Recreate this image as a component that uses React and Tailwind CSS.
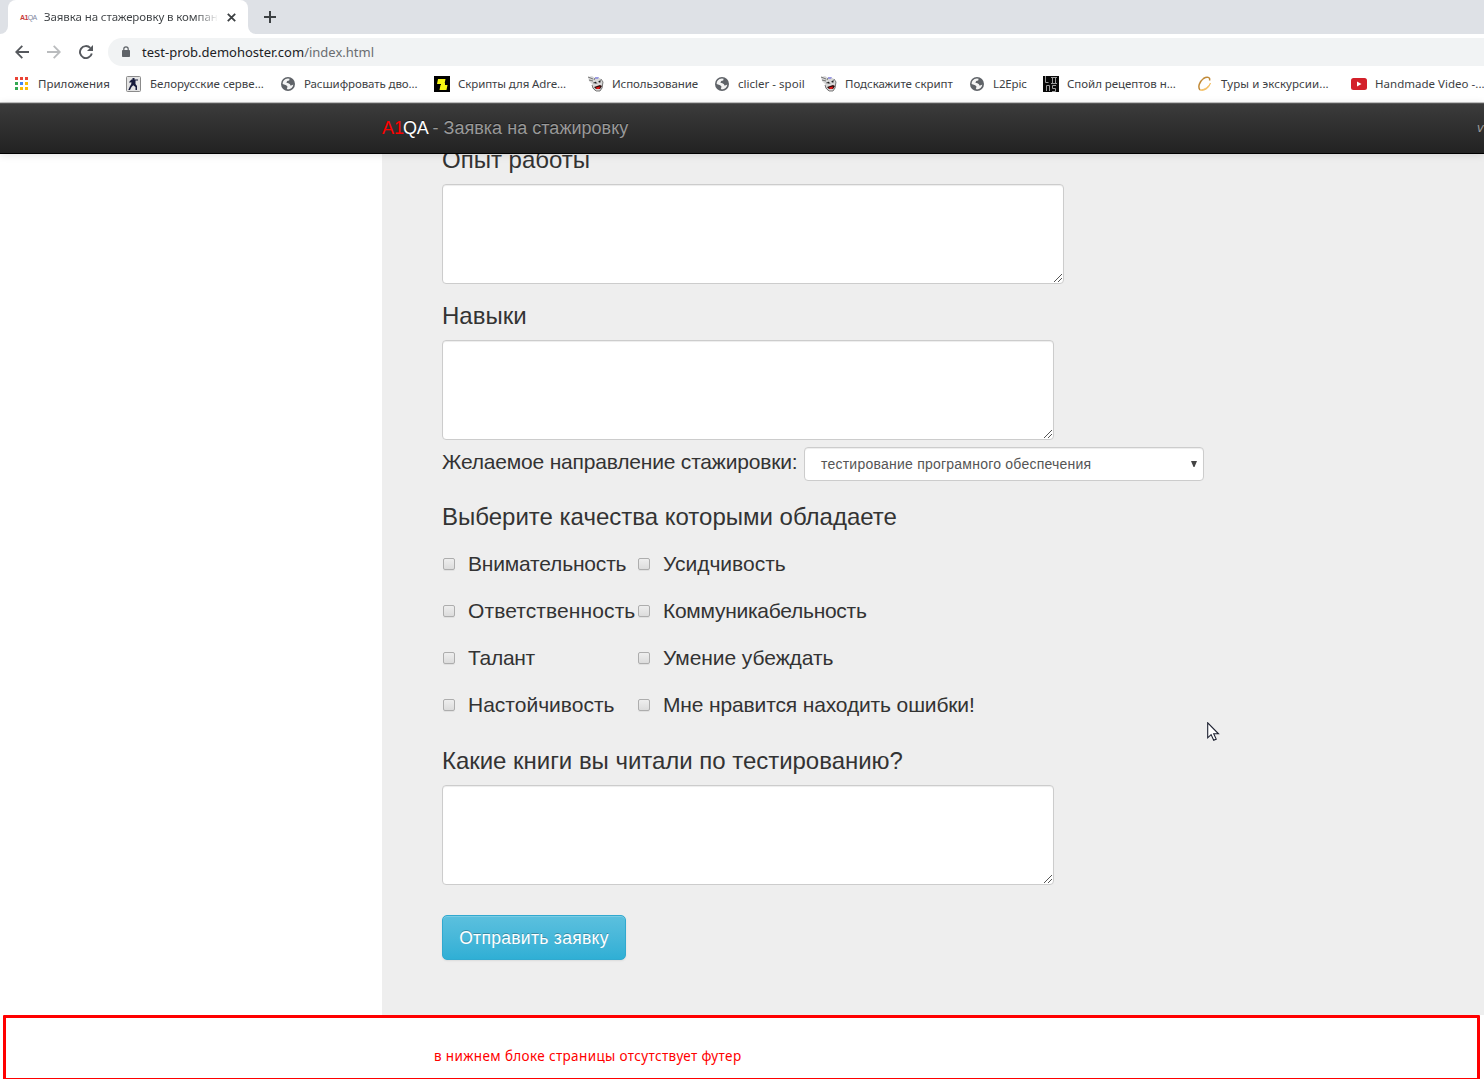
import React from "react";

function Globe() {
  return (
    <svg width="14" height="14" viewBox="0 0 14 14" className="block">
      <circle cx="7" cy="7" r="7" fill="#5f6368" />
      <path d="M1.600 7C1.600 4 3.500 1.800 6.800 1.600L8.600 1.800 8.200 3.400 6.200 4 5.400 5.800 7.400 6.200 9 7.200 9.400 8.400 11 8.200 12.300 7.400C12 10.400 10 12.300 6.800 12.400L5.800 11.600 6.600 9.800 5.200 8.200Z" fill="#f4f4f4" />
    </svg>
  );
}

function AppsGrid() {
  const dots = ["#ea4335", "#ea4335", "#ea4335", "#34a853", "#4285f4", "#fbbc05", "#34a853", "#fbbc05", "#fbbc05"];
  return (
    <svg width="14" height="14" viewBox="0 0 14 14" className="block" shapeRendering="crispEdges">
      {dots.map((c, i) => (
        <rect key={i} x={(i % 3) * 5} y={Math.floor(i / 3) * 5} width="3" height="3" fill={c} />
      ))}
    </svg>
  );
}

function CounterStrike() {
  return (
    <svg width="15" height="16" viewBox="0 0 15 16" className="block">
      <rect x=".5" y=".5" width="14" height="15" rx="1" fill="#e4e4e4" stroke="#8b8b8b" />
      <path d="M6.500 2h2v1.500H12v1H9.500V8L11 10v4H9.500v-3L7.200 9.300 5.500 11 4 14H2.300l1.500-3.500L5.300 8V6L3.500 7V5.500l2-2h1z" fill="#171c3c" />
    </svg>
  );
}

function YellowScript() {
  return (
    <svg width="16" height="16" viewBox="0 0 16 16" className="block">
      <rect width="16" height="16" fill="#000" />
      <path d="M4 3h7.500l-1 5H3zM6.500 9h7l-1 5H5.500z" fill="#f6f613" />
      <path d="M7 7h4v3H7z" fill="#f6f613" />
    </svg>
  );
}

function Gremlin() {
  return (
    <svg width="16" height="16" viewBox="0 0 16 16" className="block">
      <path d="M0 1 4 0 7 2 12 2 15 6 14.500 12 12 15 7 15 4 12 4 8 1 5Z" fill="#d8d8d8" />
      <path d="M0 1 5 3M1 4 5 5M7 2 6 4M5 7l3-1 1 2M10 6l3-2M4 9l1 3 3 3h4l2-3 1-6-2-3" stroke="#5b5b5b" strokeWidth=".8" fill="none" />
      <path d="M7 1h4l-1 2H7z" fill="#9a9ae0" />
      <path d="M6.500 6h1.500v1.500H6.500zM11 5h1.500v1.500H11z" fill="#222" />
      <path d="M6 11 12 9 14 10 12 13 8 13Z" fill="#2c0808" />
      <path d="M8 11.500 12 10.500 11.500 13H8.500Z" fill="#e01818" />
    </svg>
  );
}

function Lines() {
  return (
    <svg width="16" height="16" viewBox="0 0 16 16" className="block">
      <rect width="16" height="16" fill="#080808" />
      <path d="M2.500 0v6.500h3M8 1.500h6M9.500 1.500v6M12.500 1.500v6M8 7.500h6M3.500 15v-5.500h3V15M13 9.500H9.500v3h3v3H9" stroke="#9c9c9c" fill="none" />
    </svg>
  );
}

function GoldRing() {
  return (
    <svg width="14" height="16" viewBox="0 0 14 16" className="block">
      <path d="M11.500 4.500C12.500 1 9 .3 5.500 2.500 1.500 5.500-.5 11 2 14" fill="none" stroke="#c18a38" strokeWidth="1.500" />
      <path d="M2 14c4 1.500 9-1.500 10.500-7-2 3.500-5 6.500-10.500 7" fill="#f3ba54" stroke="#f3bd60" strokeWidth=".8" />
    </svg>
  );
}

function YouTube() {
  return (
    <svg width="16" height="12" viewBox="0 0 16 12" className="block">
      <rect width="16" height="12" rx="2.500" fill="#d3202a" />
      <path d="M6 3.500v5L10.500 6z" fill="#fff" />
    </svg>
  );
}

const bookmarks = [
  { icon: <AppsGrid />, slot: "w-[112px] pl-[15px]", gap: "w-[23px]", text: "Приложения", track: "tracking-[0.02px]" },
  { icon: <CounterStrike />, slot: "w-[154px] pl-[14px]", gap: "w-[24px]", text: "Белорусские серве...", track: "tracking-[0px]" },
  { icon: <Globe />, slot: "w-[154px] pl-[15px]", gap: "w-[23px]", text: "Расшифровать дво...", track: "tracking-[-0.1px]" },
  { icon: <YellowScript />, slot: "w-[154px] pl-[14px]", gap: "w-[24px]", text: "Скрипты для Adre...", track: "tracking-[-0.1px]" },
  { icon: <Gremlin />, slot: "w-[126px] pl-[14px]", gap: "w-[24px]", text: "Использование", track: "tracking-[-0.08px]" },
  { icon: <Globe />, slot: "w-[107px] pl-[15px]", gap: "w-[23px]", text: "clicler - spoil", track: "tracking-[0.02px]" },
  { icon: <Gremlin />, slot: "w-[148px] pl-[14px]", gap: "w-[24px]", text: "Подскажите скрипт", track: "tracking-[-0.04px]" },
  { icon: <Globe />, slot: "w-[74px] pl-[15px]", gap: "w-[23px]", text: "L2Epic", track: "tracking-[-0.15px]" },
  { icon: <Lines />, slot: "w-[154px] pl-[14px]", gap: "w-[24px]", text: "Спойл рецептов н...", track: "tracking-[-0.04px]" },
  { icon: <GoldRing />, slot: "w-[154px] pl-[15px]", gap: "w-[23px]", text: "Туры и экскурсии...", track: "tracking-[0.08px]" },
  { icon: <YouTube />, slot: "w-[154px] pl-[14px]", gap: "w-[24px]", text: "Handmade Video -...", track: "tracking-[0.02px]" },
];

function Browser() {
  return (
    <header className="shrink-0 bg-white font-['Noto_Sans','Open_Sans',sans-serif] text-[12px] text-[#3c4043]">
      <div className="flex h-[34px] bg-[#dee1e6]">
        <div className="flex w-2 shrink-0 bg-white">
          <div className="w-2 rounded-br-lg bg-[#dee1e6]" />
        </div>
        <div className="flex w-[240px] shrink-0 items-center rounded-t-lg bg-white pl-3">
          <span className="w-6 font-['Liberation_Sans',sans-serif] text-[7px] leading-none tracking-[-0.6px] text-[#8088a0]">
            <b className="text-[#c83a3a]">A1</b>QA
          </span>
          <span className="w-[174px] overflow-hidden whitespace-nowrap bg-gradient-to-r from-[#3c4043] from-88% to-transparent bg-clip-text text-[11.5px] tracking-[-0.1px] text-transparent">
            Заявка на стажеровку в компанию
          </span>
          <svg width="9" height="9" viewBox="0 0 9 9" className="ml-[9px]">
            <path d="M.8.8l7.400 7.400M8.200.8.8 8.200" stroke="#3c4043" strokeWidth="1.800" />
          </svg>
        </div>
        <div className="flex grow bg-white">
          <div className="flex grow items-center rounded-bl-lg bg-[#dee1e6] pl-4">
            <svg width="12" height="12" viewBox="0 0 12 12">
              <path d="M6 0v12M0 6h12" stroke="#3c4043" strokeWidth="2" />
            </svg>
          </div>
        </div>
      </div>
      <div className="flex h-[35px] items-center pl-[15px] pt-px">
        <svg width="14" height="14" viewBox="0 0 14 14">
          <path d="M14 7H1.500M7.300.8 1.200 7l6.100 6.200" fill="none" stroke="#55585d" strokeWidth="1.800" />
        </svg>
        <svg width="14" height="14" viewBox="0 0 14 14" className="ml-[18px]">
          <path d="M0 7h12.500M6.700.8 12.800 7l-6.100 6.200" fill="none" stroke="#babcbe" strokeWidth="1.800" />
        </svg>
        <svg width="14" height="14" viewBox="0 0 14 14" className="ml-[18px]">
          <path d="M12.800 8.500A6 6 0 1 1 11.300 2.900" fill="none" stroke="#55585d" strokeWidth="1.900" />
          <path d="M14 0v6H8z" fill="#55585d" />
        </svg>
        <div className="ml-[15px] flex h-7 grow items-center rounded-l-full bg-[#f1f3f4] pl-[14px]">
          <svg width="8" height="12" viewBox="0 0 8 12">
            <rect y="4" width="8" height="7" rx=".8" fill="#5f6368" />
            <path d="M1.800 5V3a2.200 2.200 0 0 1 4.400 0v2" fill="none" stroke="#5f6368" strokeWidth="1.200" />
          </svg>
          <span className="ml-3 whitespace-nowrap pt-[2px] text-[13px] text-[#202124]">
            test-prob.demohoster.com<span className="text-[#6a6d71]">/index.html</span>
          </span>
        </div>
      </div>
      <div className="flex h-[33px] items-center overflow-hidden whitespace-nowrap pb-[3px] text-[11.5px]">
        {bookmarks.map((b, i) => (
          <div key={i} className={"flex shrink-0 items-center " + b.slot}>
            <span className={"shrink-0 " + b.gap}>{b.icon}</span>
            <span className={b.track}>{b.text}</span>
          </div>
        ))}
      </div>
      <div className="h-px bg-[#c5c5c5]" />
    </header>
  );
}

function TextBox({ width }) {
  return (
    <div className={"relative h-[100px] " + width}>
      <textarea className="block h-full w-full resize-none rounded-[4px] border border-[#ccc] bg-white shadow-[inset_0_1px_1px_rgba(0,0,0,0.075)] outline-none" />
      <svg width="9" height="9" viewBox="0 0 9 9" className="absolute bottom-[1px] right-[1px]" shapeRendering="crispEdges">
        {[0, 1, 2, 3, 4, 5, 6, 7].map((i) => (
          <rect key={i} x={i} y={7 - i} width="1" height="1" fill="#555" />
        ))}
        {[0, 1, 2, 3].map((i) => (
          <rect key={i} x={4 + i} y={7 - i} width="1" height="1" fill="#555" />
        ))}
      </svg>
    </div>
  );
}

function Check({ text, track }) {
  return (
    <label className="flex items-center whitespace-nowrap">
      <span className="ml-px h-3 w-3 shrink-0 rounded-[2px] border border-[#adadad] bg-gradient-to-b from-[#eee] to-[#dcdcdc] shadow-[0_1px_0_rgba(0,0,0,0.06)]" />
      <span className={"ml-[13px] " + track}>{text}</span>
    </label>
  );
}

const qualities = [
  ["Внимательность", "tracking-[-0.18px]", "Усидчивость", "tracking-[0px]"],
  ["Ответственность", "tracking-[0.1px]", "Коммуникабельность", "tracking-[-0.27px]"],
  ["Талант", "tracking-[-0.3px]", "Умение убеждать", "tracking-[-0.07px]"],
  ["Настойчивость", "tracking-[0px]", "Мне нравится находить ошибки!", "tracking-[-0.14px]"],
];

export default function App() {
  return (
    <div className="flex h-[1079px] w-[1484px] flex-col overflow-hidden bg-white font-['Liberation_Sans',Arial,sans-serif] text-[#333]">
      <Browser />
      <nav className="relative z-10 flex h-[51px] shrink-0 items-center justify-between overflow-visible border-b border-black bg-gradient-to-b from-[#3c3c3c] to-[#222] pl-[382px] shadow-[0_1px_8px_rgba(0,0,0,0.12),inset_0_1px_0_#555]">
        <span className="flex whitespace-nowrap text-[18px] text-[#999] [text-shadow:0_-1px_0_rgba(0,0,0,0.5)]">
          <span className="text-[#f00] [text-shadow:none]">A1</span>
          <span className="-ml-px tracking-[-0.3px] text-white">QA</span>
          <span className="ml-1 tracking-[0.03px]">- Заявка на стажировку</span>
        </span>
        <span className="w-[7px] overflow-hidden text-[13px] italic text-[#999]">v</span>
      </nav>
      <main className="ml-[382px] h-[861px] shrink-0 bg-[#eee] pl-[60px]">
        <h2 className="h-[30px] whitespace-nowrap text-[24px] leading-none">
          <span className="relative -top-[6px]">Опыт работы</span>
        </h2>
        <TextBox width="w-[622px]" />
        <h2 className="flex h-14 items-center whitespace-nowrap pt-2 text-[24px] leading-none">Навыки</h2>
        <TextBox width="w-[612px]" />
        <div className="mt-[7px] flex h-[34px]">
          <span className="w-[362px] whitespace-nowrap text-[21px] leading-[30px] tracking-[-0.19px]">Желаемое направление стажировки:</span>
          <div className="flex w-[400px] items-center justify-between rounded-[4px] border border-[#ccc] bg-white pl-4 pr-[6px] text-[14px] tracking-[0.23px] text-[#555] shadow-[inset_0_1px_1px_rgba(0,0,0,0.075)]">
            <span>тестирование програмного обеспечения</span>
            <svg width="6" height="6" viewBox="0 0 6 6"><path d="M0 0h6L3.500 6h-1z" fill="#444" /></svg>
          </div>
        </div>
        <h2 className="flex h-[59px] items-center whitespace-nowrap pt-[13px] text-[24px] leading-none">Выберите качества которыми обладаете</h2>
        <div className="mb-px text-[21px] leading-none">
          {qualities.map((q) => (
            <div key={q[0]} className="grid h-[47px] grid-cols-[195px_400px]">
              <Check text={q[0]} track={q[1]} />
              <Check text={q[2]} track={q[3]} />
            </div>
          ))}
        </div>
        <h2 className="flex h-14 items-center whitespace-nowrap pt-2 text-[24px] leading-none tracking-[-0.03px]">Какие книги вы читали по тестированию?</h2>
        <TextBox width="w-[612px]" />
        <button className="mt-[30px] block h-[45px] w-[184px] whitespace-nowrap rounded-[5px] border border-[#31a9cf] bg-gradient-to-b from-[#5bc0de] to-[#2fafd5] pt-px text-[17.5px] tracking-[0.3px] text-white shadow-[inset_0_1px_0_rgba(255,255,255,0.2),0_1px_2px_rgba(0,0,0,0.08)] [text-shadow:0_-1px_0_rgba(0,0,0,0.25)]">
          Отправить заявку
        </button>
      </main>
      <footer className="ml-[3px] mr-1 h-16 shrink-0 rounded-t-[1px] border-x-[3px] border-b border-t-[3px] border-[#f00] pl-[428px] pt-[28px] font-['Noto_Sans',sans-serif] text-[13.5px] leading-[20px] tracking-[0.36px] text-[#f00]">
        в нижнем блоке страницы отсутствует футер
      </footer>
      <svg width="14" height="20" viewBox="0 0 14 20" className="absolute left-[1207px] top-[722px]">
        <path d="M.7.800v15l3.400-3.200 2.600 5.600 2.500-1.100-2.500-5.300h4.800z" fill="#fff" stroke="#1c2030" strokeWidth="1.100" />
      </svg>
    </div>
  );
}
